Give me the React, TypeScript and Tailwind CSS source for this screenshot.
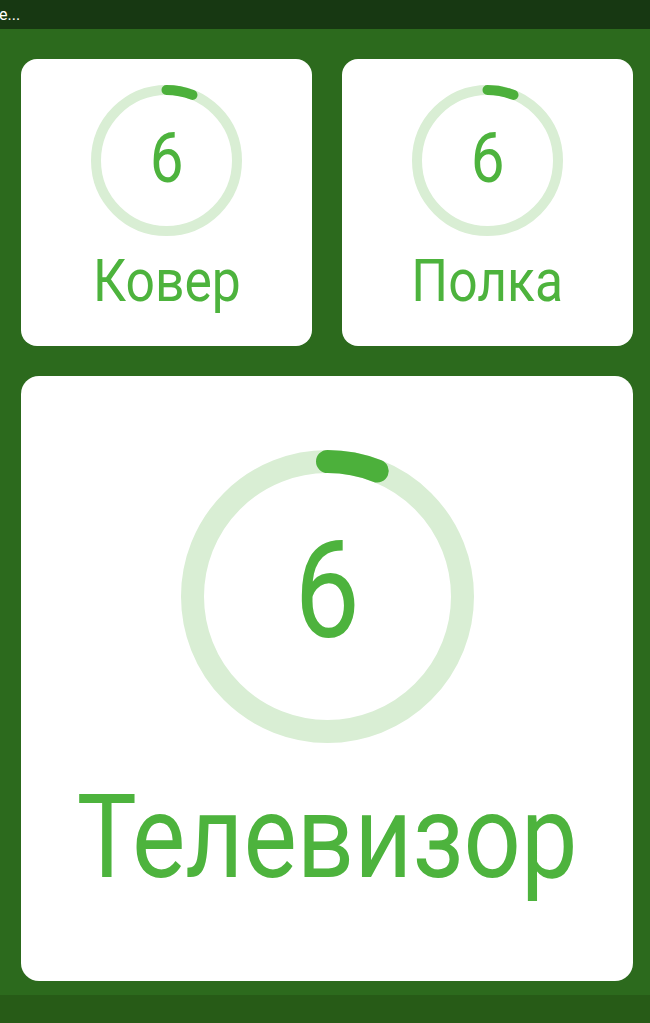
import React from "react";

function Ring({ size, stroke, frac }: { size: number; stroke: number; frac: number }) {
  const r = size / 2 - stroke / 2;
  const c = 2 * Math.PI * r;
  return (
    <svg width={size} height={size} viewBox={`0 0 ${size} ${size}`} className="block">
      <circle cx={size / 2} cy={size / 2} r={r} fill="none" stroke="#d9eed4" strokeWidth={stroke} />
      <circle
        cx={size / 2}
        cy={size / 2}
        r={r}
        fill="none"
        stroke="#4cb03b"
        strokeWidth={stroke}
        strokeLinecap="round"
        strokeDasharray={`${c * frac} ${c}`}
        transform={`rotate(-90 ${size / 2} ${size / 2})`}
      />
    </svg>
  );
}

function SmallCard({ label }: { label: string }) {
  return (
    <div className="bg-white rounded-[16px] flex flex-col items-center pt-[26px]">
      <div className="relative w-[151px] h-[151px]">
        <Ring size={151} stroke={10} frac={0.06} />
        <div className="absolute inset-0 flex items-center justify-center pb-[6px] text-[70px] leading-none text-[#4db33d]">
          <span className="scale-x-[0.86]">6</span>
        </div>
      </div>
      <div className="mt-[15px] text-[60px] leading-none text-[#4db33d] scale-x-[0.86]">{label}</div>
    </div>
  );
}

export default function App() {
  return (
    <div
      className="w-[650px] h-[1023px] flex flex-col bg-[#2c6a1d] overflow-hidden"
      style={{ fontFamily: "Roboto, 'Noto Sans', sans-serif" }}
    >
      <div className="h-[29px] bg-[#173812] flex items-center text-white text-[16px] leading-none">
        <span className="-ml-[1px]">е...</span>
      </div>
      <div className="flex flex-col gap-[30px] px-[21px] pt-[30px] pr-[17px]">
        <div className="grid grid-cols-2 gap-[30px] h-[287px]">
          <SmallCard label="Ковер" />
          <SmallCard label="Полка" />
        </div>
        <div className="bg-white rounded-[18px] h-[605px] flex flex-col items-center pt-[74px]">
          <div className="relative w-[293px] h-[293px]">
            <Ring size={293} stroke={23} frac={0.06} />
            <div className="absolute inset-0 flex items-center justify-center pb-[12px] text-[136px] leading-none text-[#4db33d]">
              <span className="scale-x-[0.86]">6</span>
            </div>
          </div>
          <div className="mt-[36px] text-[117px] leading-none text-[#4db33d] scale-x-[0.86]">Телевизор</div>
        </div>
      </div>
      <div className="mt-auto h-[28px] bg-[#275b17]" />
    </div>
  );
}
